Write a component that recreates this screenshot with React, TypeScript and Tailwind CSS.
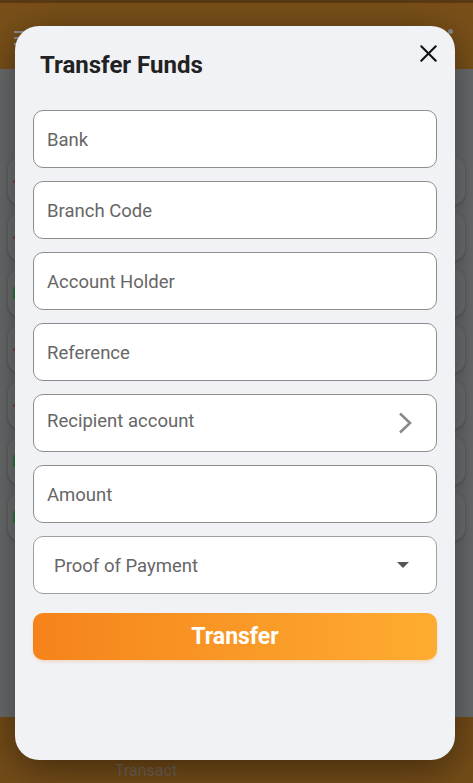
import { X } from "lucide-react";

const cards = [
  { kind: "red" },
  { kind: "red" },
  { kind: "green" },
  { kind: "red" },
  { kind: "red" },
  { kind: "green" },
  { kind: "green" },
];

const fields = ["Bank", "Branch Code", "Account Holder", "Reference"];

function Field({ label }: { label: string }) {
  return (
    <div className="h-[58px] rounded-[10px] border border-[#8e8e8e] bg-white flex items-center pl-[13px] pt-[3px]">
      <span className="text-[18.5px] text-[#666666]">{label}</span>
    </div>
  );
}

export default function App() {
  return (
    <div
      className="relative h-[783px] w-full overflow-hidden"
      style={{ fontFamily: "Roboto, 'Noto Sans', sans-serif" }}
    >
      {/* dimmed app behind the dialog */}
      <div className="flex h-full flex-col">
        <div className="h-[3px] bg-[#5a3a14]" />
        <div className="h-[66px] bg-[#7a5019] flex items-start justify-between px-[14px] pt-[26px]">
          <div className="flex flex-col gap-[4px] pt-[2px]">
            <div className="h-[2px] w-[15px] bg-[#8d8d8d]" />
            <div className="h-[2px] w-[15px] bg-[#8d8d8d]" />
            <div className="h-[2px] w-[15px] bg-[#8d8d8d]" />
          </div>
          <div className="mr-[6px] h-[5px] w-[5px] rounded-full bg-[#8d8d8d]" />
        </div>
        <div className="flex-1 bg-[#6b6c6d] px-2 pt-[88px] flex flex-col gap-[8px]">
          {cards.map((c, i) => (
            <div
              key={i}
              className="h-[48px] rounded-xl bg-[#707172] shadow-[0_1px_3px_rgba(0,0,0,0.25)] flex items-center pl-[5px]"
            >
              {c.kind === "red" ? (
                <div className="h-[3px] w-[3px] rounded-full bg-[#8a3a35]" />
              ) : (
                <div className="h-[12px] w-[3px] bg-[#2f7a43]" />
              )}
            </div>
          ))}
        </div>
        <div className="h-[66px] bg-[#744c18] pl-[115px] pt-[42px]">
          <span className="text-[16px] text-[#6f6257]">Transact</span>
        </div>
      </div>

      {/* dialog */}
      <div className="absolute left-[15px] top-[26px] h-[734px] w-[440px] rounded-[24px] bg-[#f0f2f6] shadow-[0_8px_40px_rgba(0,0,0,0.45)] px-[18px] pt-[25px]">
        <button className="absolute right-[12px] top-[13px] text-[#111]">
          <X size={29} strokeWidth={1.7} />
        </button>
        <h2 className="pl-[7px] text-[24px] leading-[28px] font-bold text-[#222222]">
          Transfer Funds
        </h2>
        <div className="mt-[31px] flex flex-col gap-[13px]">
          {fields.map((f) => (
            <Field key={f} label={f} />
          ))}
          <div className="h-[58px] rounded-[10px] border border-[#8e8e8e] bg-white flex items-center justify-between pl-[13px] pr-[24px]">
            <span className="text-[18.5px] text-[#666666] -mt-[3px]">Recipient account</span>
            <svg width="14" height="22" viewBox="0 0 14 22" fill="none">
              <polyline points="2,1.5 12,11 2,20.5" stroke="#8a8a8a" strokeWidth="2.6" />
            </svg>
          </div>
          <Field label="Amount" />
          <div className="h-[58px] rounded-[10px] border border-[#a0a0a0] bg-white flex items-center justify-between pl-[20px] pr-[27px]">
            <span className="text-[18.5px] text-[#666666] pt-[3px]">Proof of Payment</span>
            <svg width="12" height="6" viewBox="0 0 12 6">
              <polygon points="0,0 12,0 6,6" fill="#555555" />
            </svg>
          </div>
        </div>
        <button className="mt-[19px] h-[47px] w-full rounded-[10px] bg-gradient-to-r from-[#f5831a] to-[#feac31] pt-[2px] text-[23px] font-bold text-white shadow-[0_2px_3px_rgba(245,131,26,0.2)]">
          Transfer
        </button>
      </div>
    </div>
  );
}
